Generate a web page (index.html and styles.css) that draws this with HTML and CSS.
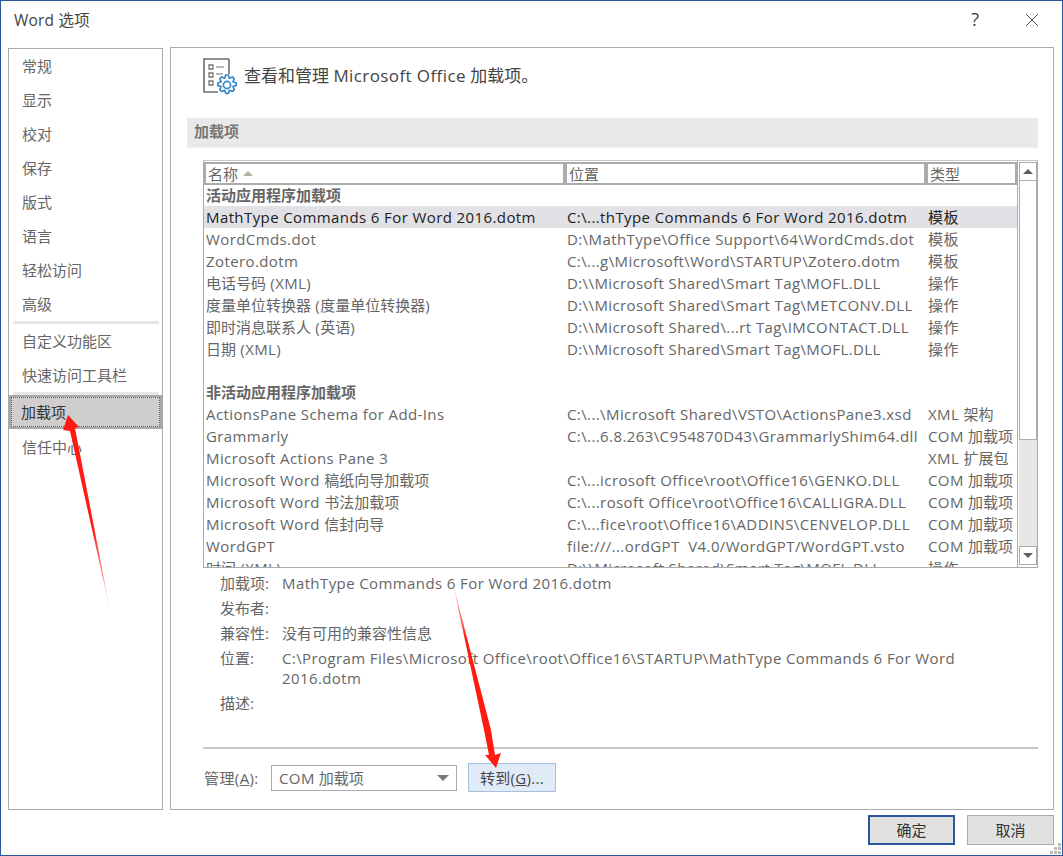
FILE: index.html
```html
<!DOCTYPE html>
<html lang="zh-CN">
<head>
<meta charset="utf-8">
<title>Word 选项</title>
<link rel="stylesheet" href="styles.css">
</head>
<body>
<div class="dialog">
  <header class="titlebar">
    <div class="title">Word 选项</div>
    <div class="help">?</div>
    <svg class="close" width="14" height="14" viewBox="0 0 14 14"><path d="M1 1 13 13M13 1 1 13" stroke="#444" stroke-width="1" fill="none"/></svg>
  </header>
  <div class="content">
    <nav class="sidebar">
      <div class="nav-item">常规</div>
      <div class="nav-item">显示</div>
      <div class="nav-item">校对</div>
      <div class="nav-item">保存</div>
      <div class="nav-item">版式</div>
      <div class="nav-item">语言</div>
      <div class="nav-item">轻松访问</div>
      <div class="nav-item">高级</div>
      <div class="nav-sep"></div>
      <div class="nav-item">自定义功能区</div>
      <div class="nav-item">快速访问工具栏</div>
      <div class="nav-sep"></div>
      <div class="nav-item selected"><span>加载项</span></div>
      <div class="nav-item">信任中心</div>
    </nav>
    <main class="panel">
      <div class="panel-head">
        <svg class="head-icon" width="36" height="38" viewBox="0 0 36 38">
          <path d="M26 1H1v33h14" fill="none" stroke="#6d6d6d" stroke-width="1.6"/>
          <path d="M26 1v15" fill="none" stroke="#6d6d6d" stroke-width="1.6"/>
          <path d="M6 7h4v4H6zM6 15h4v4H6zM6 23h4v4H6z" fill="none" stroke="#777" stroke-width="1.3"/>
          <path d="M13 9h8M13 16h7" stroke="#777" stroke-width="1.2"/>
          <g transform="translate(24 27) scale(1.09) translate(-26.1 -28.7)">
            <path d="M25 19.500l2.300 0 1 3 2.800-1.200 1.700 1.700-1.200 2.800 3 1v2.400l-3 1 1.200 2.800-1.700 1.700-2.800-1.200-1 3h-2.300l-1-3-2.800 1.200-1.700-1.700 1.200-2.800-3-1v-2.400l3-1-1.200-2.800 1.700-1.700 2.800 1.200z" fill="#fff" stroke="#2e86c9" stroke-width="1.500" stroke-linejoin="round"/>
            <circle cx="26.100" cy="28.700" r="3.300" fill="none" stroke="#2e86c9" stroke-width="1.500"/>
          </g>
        </svg>
        <div class="head-text">查看和管理 <span class="lat">Microsoft Office</span> 加载项。</div>
      </div>
      <div class="section-band">加载项</div>
      <div class="addin-box">
        <div class="addin-list">
          <div class="list-header">
            <div class="col-head col-name">名称<span class="sort-up"></span></div>
            <div class="col-head col-loc">位置</div>
            <div class="col-head col-type">类型</div>
          </div>
          <div class="group">活动应用程序加载项</div>
          <div class="row active"><span>MathType Commands 6 For Word 2016.dotm</span><span>C:\...thType Commands 6 For Word 2016.dotm</span><span>模板</span></div>
          <div class="row"><span>WordCmds.dot</span><span>D:\MathType\Office Support\64\WordCmds.dot</span><span>模板</span></div>
          <div class="row"><span>Zotero.dotm</span><span>C:\...g\Microsoft\Word\STARTUP\Zotero.dotm</span><span>模板</span></div>
          <div class="row"><span><em class="z">电话号码</em> (XML)</span><span>D:\\Microsoft Shared\Smart Tag\MOFL.DLL</span><span>操作</span></div>
          <div class="row"><span><em class="z">度量单位转换器</em> (<em class="z">度量单位转换器</em>)</span><span>D:\\Microsoft Shared\Smart Tag\METCONV.DLL</span><span>操作</span></div>
          <div class="row"><span><em class="z">即时消息联系人</em> (<em class="z">英语</em>)</span><span>D:\\Microsoft Shared\...rt Tag\IMCONTACT.DLL</span><span>操作</span></div>
          <div class="row"><span><em class="z">日期</em> (XML)</span><span>D:\\Microsoft Shared\Smart Tag\MOFL.DLL</span><span>操作</span></div>
          <div class="row blank"></div>
          <div class="group">非活动应用程序加载项</div>
          <div class="row"><span>ActionsPane Schema for Add-Ins</span><span>C:\...\Microsoft Shared\VSTO\ActionsPane3.xsd</span><span>XML <em class="z">架构</em></span></div>
          <div class="row"><span>Grammarly</span><span>C:\...6.8.263\C954870D43\GrammarlyShim64.dll</span><span>COM <em class="z">加载项</em></span></div>
          <div class="row"><span>Microsoft Actions Pane 3</span><span></span><span>XML <em class="z">扩展包</em></span></div>
          <div class="row"><span>Microsoft Word <em class="z">稿纸向导加载项</em></span><span>C:\...icrosoft Office\root\Office16\GENKO.DLL</span><span>COM <em class="z">加载项</em></span></div>
          <div class="row"><span>Microsoft Word <em class="z">书法加载项</em></span><span>C:\...rosoft Office\root\Office16\CALLIGRA.DLL</span><span>COM <em class="z">加载项</em></span></div>
          <div class="row"><span>Microsoft Word <em class="z">信封向导</em></span><span>C:\...fice\root\Office16\ADDINS\CENVELOP.DLL</span><span>COM <em class="z">加载项</em></span></div>
          <div class="row"><span>WordGPT</span><span>file:///...ordGPT&nbsp; V4.0/WordGPT/WordGPT.vsto</span><span>COM <em class="z">加载项</em></span></div>
          <div class="row"><span><em class="z">时间</em> (XML)</span><span>D:\\Microsoft Shared\Smart Tag\MOFL.DLL</span><span>操作</span></div>
        </div>
        <div class="scrollbar">
          <div class="sb-btn"><span class="tri-up"></span></div>
          <div class="sb-thumb"></div>
          <div class="sb-track"></div>
          <div class="sb-btn"><span class="tri-down"></span></div>
        </div>
      </div>
      <div class="details">
        <div class="d-label">加载项:</div><div class="d-val">MathType Commands 6 For Word 2016.dotm</div>
        <div class="d-label">发布者:</div><div class="d-val"></div>
        <div class="d-label">兼容性:</div><div class="d-val"><em class="z">没有可用的兼容性信息</em></div>
        <div class="d-label">位置:</div><div class="d-val">C:\Program Files\Microsoft Office\root\Office16\STARTUP\MathType Commands 6 For Word 2016.dotm</div>
        <div class="d-label">描述:</div><div class="d-val"></div>
      </div>
      <div class="divider"></div>
      <div class="manage">
        <div class="manage-label">管理(<u>A</u>):</div>
        <div class="select"><span><span class="lat">COM</span> 加载项</span><span class="select-tri"></span></div>
        <div class="go-btn">转到(<u>G</u>)...</div>
      </div>
    </main>
  </div>
  <footer class="footer">
    <div class="btn primary">确定</div>
    <div class="btn">取消</div>
  </footer>
  <svg class="grip" width="12" height="12" viewBox="0 0 12 12"><path d="M8 0h3v3H8zM4 4h3v3H4zM8 4h3v3H8zM0 8h3v3H0zM4 8h3v3H4zM8 8h3v3H8z" fill="#bbb"/></svg>
  <svg class="arrows" width="1063" height="856" viewBox="0 0 1063 856">
    <defs>
      <linearGradient id="fadeA" gradientUnits="userSpaceOnUse" x1="72" y1="430" x2="110" y2="610"><stop offset="0.55" stop-color="#ff1a12"/><stop offset="1" stop-color="#ff1a12" stop-opacity="0.1"/></linearGradient>
      <linearGradient id="fadeB" gradientUnits="userSpaceOnUse" x1="453" y1="584" x2="490" y2="740"><stop offset="0" stop-color="#ff1a12" stop-opacity="0.1"/><stop offset="0.35" stop-color="#ff1a12"/></linearGradient>
    </defs>
    <polygon points="68,415 79,427 75,428 110,610 70,431 63,430" fill="url(#fadeA)"/>
    <polygon points="453,584 491,730 495,755 501,753 496,768 485,755 489,755 484,730" fill="url(#fadeB)"/>
  </svg>
</div>
</body>
</html>
```
FILE: styles.css
```css
* { box-sizing: border-box; }
html, body { margin: 0; padding: 0; }
body {
  width: 1063px;
  height: 856px;
  overflow: hidden;
  background: #fff;
  font-family: "Open Sans", "Noto Sans CJK SC", sans-serif;
  font-size: 15px;
  color: #666;
}
.z { font-style: normal; letter-spacing: 0; }
.lat { letter-spacing: 0.4px; }
.dialog {
  position: relative;
  width: 1063px;
  height: 856px;
  border: 1px solid #2b579a;
  display: flex;
  flex-direction: column;
  background: #fff;
}
.titlebar {
  height: 46px;
  flex: none;
  display: flex;
  align-items: center;
  padding: 0 23px 0 13px;
}
.title { font-size: 15.500px; color: #444; flex: 1; margin-top: -10px; letter-spacing: 0.2px; }
.help { font-size: 18px; color: #444; margin: -10px 46px 0 0; }
.close { margin-top: -9px; }
.content {
  flex: none;
  height: 763px;
  display: flex;
  gap: 7px;
  padding: 0 8px 0 7px;
}
.sidebar {
  width: 155px;
  margin-top: 1px;
  border: 1px solid #ababab;
  display: flex;
  flex-direction: column;
  flex: none;
}
.nav-item {
  height: 34px;
  flex: none;
  display: flex;
  align-items: center;
  padding: 0 0 0 13px;
  line-height: 1;
}
.nav-sep {
  height: 3px;
  flex: none;
  margin: 0 3px 0 4px;
  background: #e6e6e6;
}
.nav-item.selected {
  background: #d0cecd;
  color: #333;
  padding: 1px 0 0 10px;
  border: 2px solid #a8a8a8;
  outline: 1px dotted #666;
  outline-offset: -3px;
  margin: 0 0 1px;
  height: 34px;
}
.panel {
  flex: 1;
  border: 1px solid #ababab;
  display: flex;
  flex-direction: column;
  padding: 0 15px 0 16px;
  min-width: 0;
}
.panel-head {
  height: 70px;
  flex: none;
  display: flex;
  align-items: flex-start;
  padding: 10px 0 0 16px;
}
.head-icon { flex: none; }
.head-text { font-size: 17px; color: #444; margin: 6px 0 0 5px; line-height: 24px; white-space: nowrap; }
.section-band {
  height: 30px;
  flex: none;
  background: #e9e9e9;
  border-bottom: 1px solid #f0f0f0;
  padding-left: 7px;
  line-height: 26px;
  font-weight: 700;
  color: #777;
}
.addin-box {
  margin: 12px 0 0 16px;
  height: 408px;
  flex: none;
  border: 1px solid #ababab;
  border-top-color: #c8c8c8;
  display: flex;
  overflow: hidden;
}
.addin-list { width: 813px; flex: none; overflow: hidden; }
.list-header {
  height: 23px;
  background: #ababab;
  margin-top: 1px;
  padding: 2px 0 2px 2px;
  display: grid;
  grid-template-columns: 357px 357px 87px;
  column-gap: 4px;
}
.col-head {
  background: #fff;
  padding-left: 2px;
  line-height: 18px;
  display: flex;
  align-items: center;
  white-space: nowrap;
}
.sort-up {
  width: 0; height: 0;
  margin-left: 5px;
  border: 5px solid transparent;
  border-top: 0;
  border-bottom: 5px solid #b5b0a3;
}
.group {
  height: 21px;
  line-height: 21px;
  font-weight: 700;
  padding-left: 2px;
  color: #666;
  white-space: nowrap;
}
.row {
  height: 22px;
  line-height: 22px;
  display: grid;
  grid-template-columns: 361px 361px 89px;
  padding-left: 2px;
  white-space: nowrap;
  letter-spacing: 0.4px;
}
.row span { overflow: hidden; }
.row span:nth-child(2) { padding-right: 9px; }
.row.active { background: #e1e1e6; color: #222; }
.scrollbar {
  width: 21px;
  flex: none;
  display: flex;
  flex-direction: column;
  padding: 1px 1px 2px 1px;
  background: #fff;
  border-left: 1px solid #ababab;
}
.sb-btn {
  height: 19px;
  flex: none;
  border: 1px solid #ababab;
  display: flex;
  align-items: center;
  justify-content: center;
  background: #fff;
}
.sb-thumb { height: 259px; flex: none; border: 1px solid #ababab; border-top: 0; background: #fff; }
.sb-track { flex: 1; background: #e6e6e6; }
.tri-up, .tri-down { width: 0; height: 0; border: 5px solid transparent; }
.tri-up { border-top: 0; border-bottom: 5px solid #606060; }
.tri-down { border-bottom: 0; border-top: 5px solid #606060; }
.details {
  margin: 5px 0 0 33px;
  height: 174px;
  flex: none;
  display: grid;
  grid-template-columns: 62px 700px;
  grid-auto-rows: min-content;
  row-gap: 5px;
  line-height: 20px;
  align-content: start;
}
.details .d-val { min-height: 20px; letter-spacing: 0.4px; }
.divider {
  height: 2px;
  flex: none;
  margin-left: 16px;
  background: #c6c6c6;
}
.manage {
  margin: 14px 0 0 17px;
  display: flex;
  align-items: center;
  flex: none;
}
.manage-label { width: 67px; flex: none; letter-spacing: 0.4px; white-space: nowrap; }
.select {
  width: 186px;
  height: 26px;
  flex: none;
  border: 1px solid #ababab;
  display: flex;
  align-items: center;
  justify-content: space-between;
  padding: 0 7px;
}
.select-tri { width: 0; height: 0; border: 6px solid transparent; border-bottom: 0; border-top: 6px solid #777; }
.go-btn {
  width: 88px;
  height: 29px;
  margin-left: 11px;
  flex: none;
  background: #e1ebf8;
  border: 1px solid #a6bfdc;
  color: #444;
  letter-spacing: 0.3px;
  display: flex;
  align-items: center;
  justify-content: center;
}
.footer {
  flex: none;
  display: flex;
  justify-content: flex-end;
  gap: 12px;
  padding: 5px 8px 0 0;
}
.btn {
  width: 87px;
  height: 30px;
  background: #e1e1e1;
  border: 1px solid #ababab;
  color: #333;
  display: flex;
  align-items: center;
  justify-content: center;
  padding-bottom: 2px;
}
.btn.primary { border: 2px solid #2b579a; }
.grip { position: absolute; right: 0; bottom: 0; }
.arrows { position: absolute; left: -1px; top: -1px; pointer-events: none; }
```
